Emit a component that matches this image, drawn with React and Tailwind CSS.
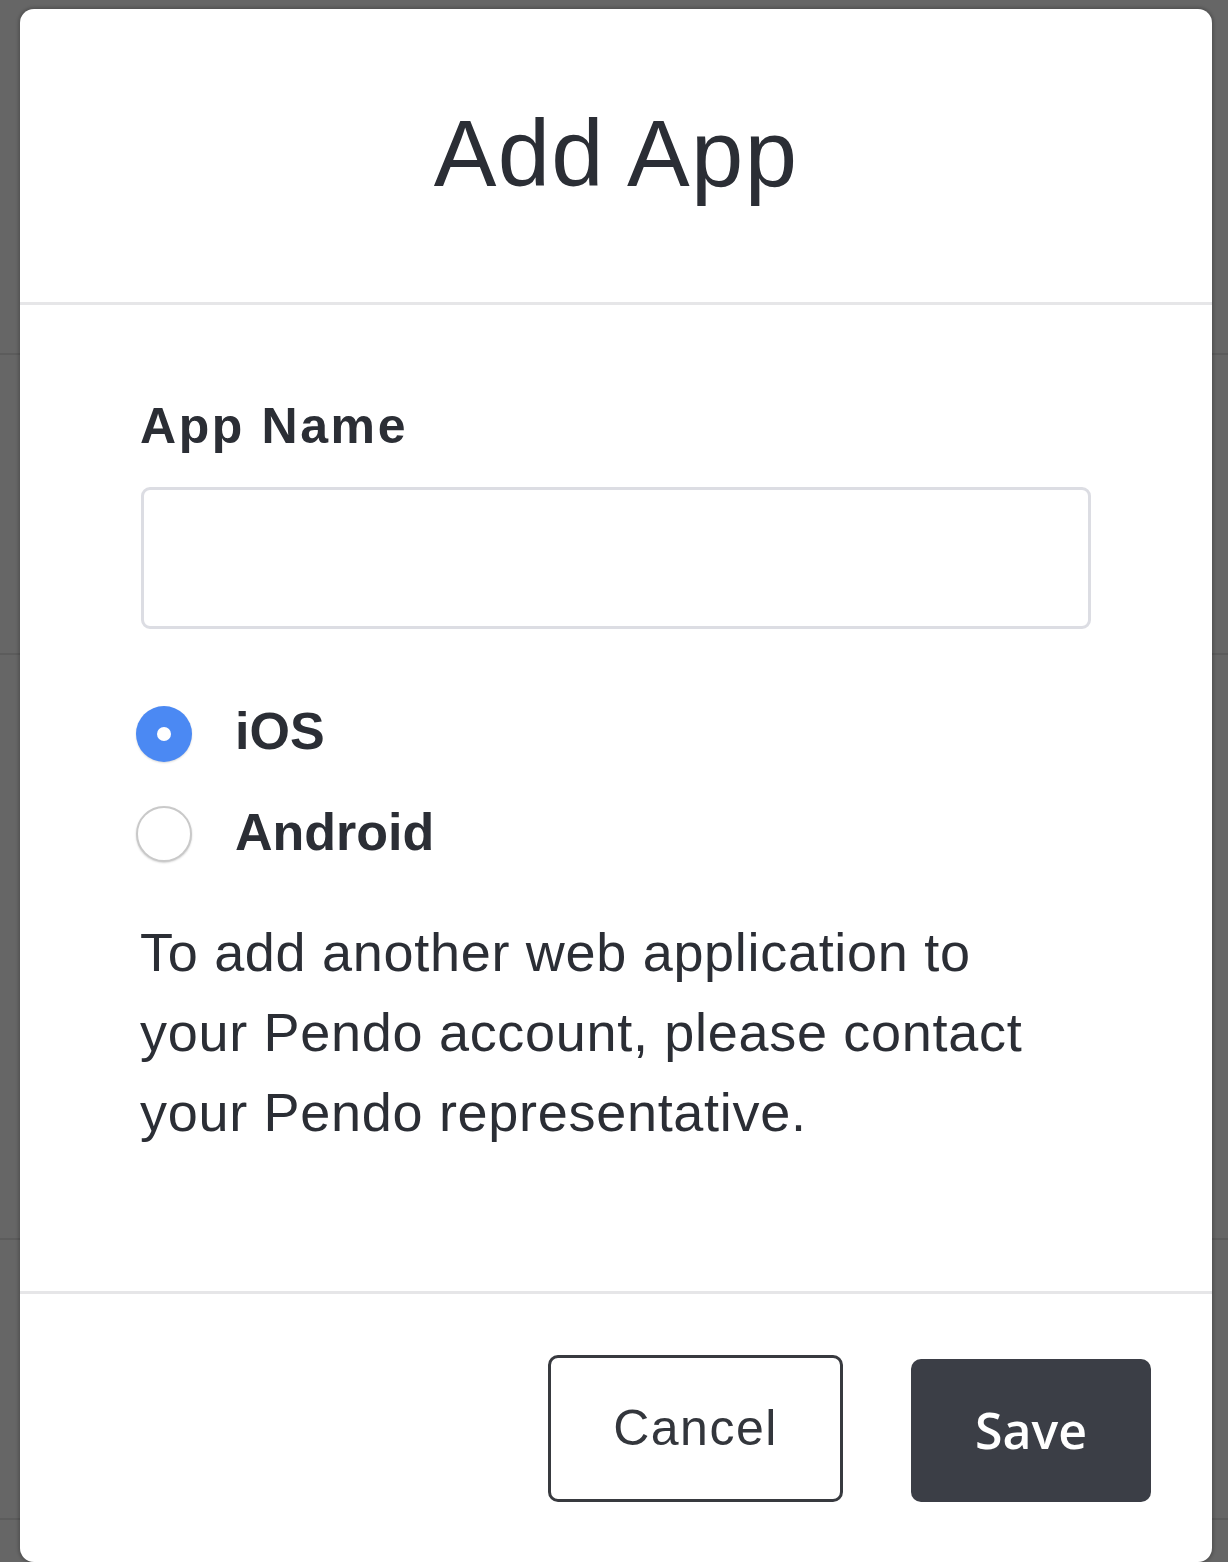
import React from "react";

export default function App() {
  const font = { fontFamily: '"Liberation Sans", Arial, sans-serif' };
  return (
    <div
      className="relative w-[1228px] h-[1562px] bg-[#666666] overflow-hidden"
      style={font}
    >
      {/* dimmed page behind overlay */}
      <div className="absolute inset-0 flex flex-col">
        <div className="h-[355px] border-b-2 border-[#5c5c5c]" />
        <div className="h-[300px] border-b-2 border-[#5c5c5c]" />
        <div className="h-[585px] border-b-2 border-[#5c5c5c]" />
        <div className="h-[280px] border-b-2 border-[#5c5c5c]" />
      </div>

      <div className="relative ml-[20px] mt-[9px] w-[1192px] h-[1553px] bg-white rounded-[14px] shadow-[0_0_3px_2px_rgba(0,0,0,0.18)] flex flex-col">
        {/* header */}
        <div className="h-[296px] border-b-[3px] border-[#e6e6e8] flex items-center justify-center shrink-0">
          <h1 className="text-[94px] leading-none font-normal text-[#2b2e35] tracking-[1.3px] pb-[4px]">
            Add App
          </h1>
        </div>

        {/* body */}
        <div className="flex-1 pl-[120px] pr-[120px] pt-[91px]">
          <div className="text-[50px] leading-[60px] font-bold text-[#2b2e35] tracking-[2.6px]">
            App Name
          </div>
          <div className="mt-[31px] ml-[1px] w-[950px] h-[142px] border-[3px] border-[#dcdde3] rounded-[9px]" />

          <div className="mt-[55px] flex flex-col">
            <div className="h-[100px] flex items-center">
              <div className="w-[56px] h-[56px] ml-[-4px] rounded-full bg-[#4b89f3] flex items-center justify-center shadow-[0_1px_2px_rgba(0,0,0,0.15)]">
                <div className="w-[14px] h-[14px] rounded-full bg-white" />
              </div>
              <span className="ml-[43px] text-[52px] font-bold text-[#2b2e35] leading-none pb-[6px]">
                iOS
              </span>
            </div>
            <div className="h-[100px] flex items-center">
              <div className="w-[56px] h-[56px] ml-[-4px] rounded-full bg-white border-[2px] border-[#c9c9c9] shadow-[0_1px_2px_rgba(0,0,0,0.18)]" />
              <span className="ml-[43px] text-[52px] font-bold text-[#2b2e35] leading-none pb-[4px]">
                Android
              </span>
            </div>
          </div>

          <p className="mt-[28px] text-[54px] leading-[80px] text-[#2b2e35] tracking-[0.7px]">
            To add another web application to
            <br />
            your Pendo account, please contact
            <br />
            your Pendo representative.
          </p>
        </div>

        {/* footer */}
        <div className="h-[271px] border-t-[3px] border-[#e6e6e8] flex items-end justify-end gap-[68px] pr-[61px] pb-[60px] shrink-0">
          <button className="w-[295px] h-[147px] border-[3px] border-[#383a3f] rounded-[10px] bg-white text-[50px] text-[#33363c] tracking-[1.5px] flex items-center justify-center">
            Cancel
          </button>
          <button
            className="w-[240px] h-[143px] rounded-[10px] bg-[#3b3e46] text-[50px] font-semibold text-white flex items-center justify-center"
            style={{ fontFamily: '"Open Sans", "Liberation Sans", sans-serif' }}
          >
            Save
          </button>
        </div>
      </div>
    </div>
  );
}
